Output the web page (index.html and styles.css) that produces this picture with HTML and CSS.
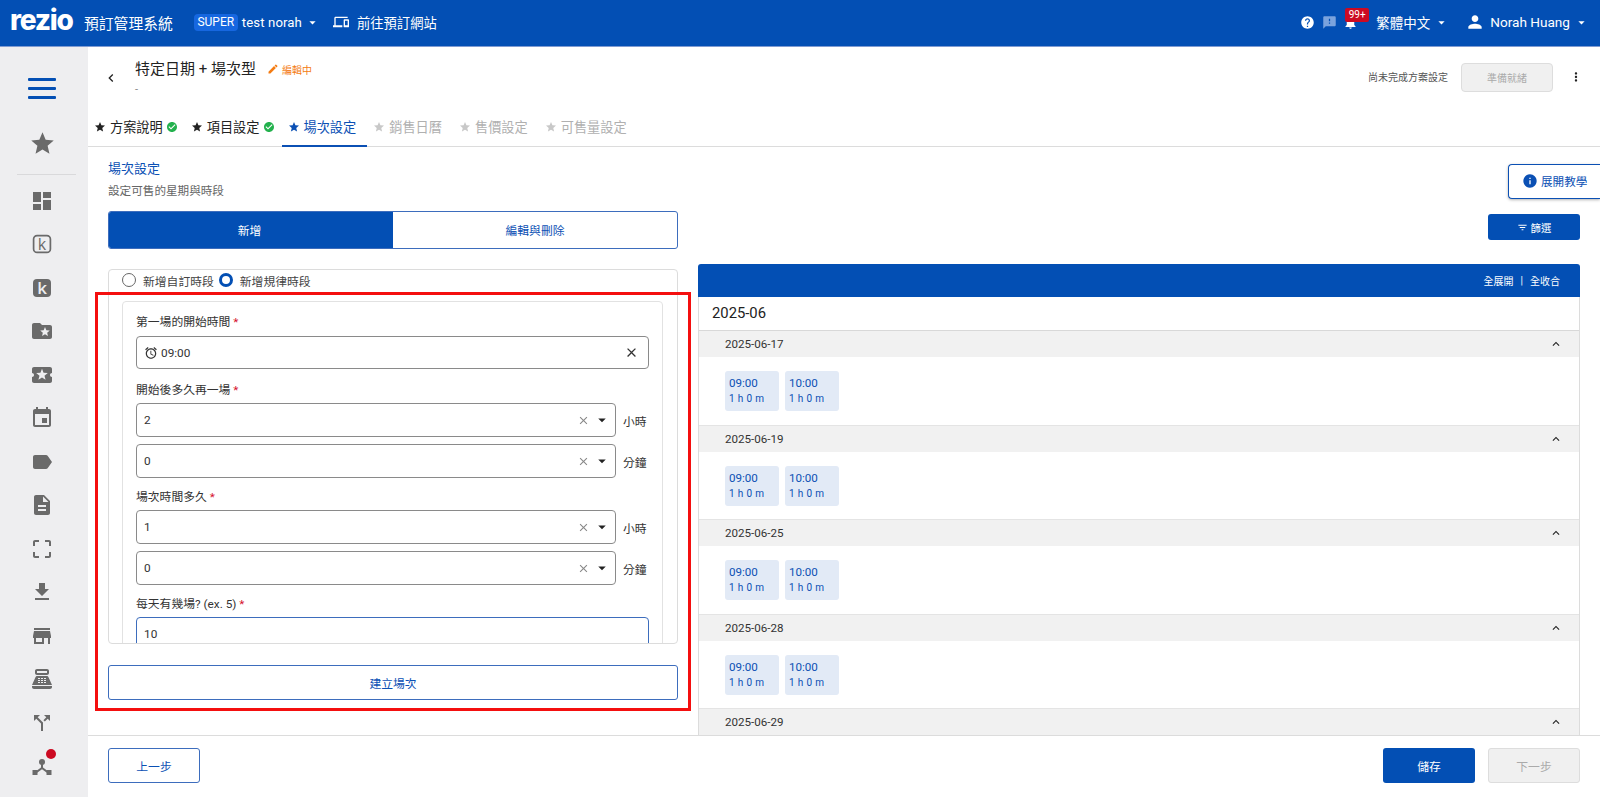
FILE: index.html
```html
<!DOCTYPE html>
<html lang="zh-Hant">
<head>
<meta charset="utf-8">
<title>預訂管理系統</title>
<link rel="stylesheet" href="styles.css">
</head>
<body>
<svg class="defs" width="0" height="0" aria-hidden="true">
  <symbol id="i-star" viewBox="0 0 24 24"><path d="M12 17.27L18.18 21l-1.64-7.03L22 9.24l-7.19-.61L12 2 9.19 8.63 2 9.24l5.46 4.73L5.82 21z"/></symbol>
  <symbol id="i-check" viewBox="0 0 24 24"><path d="M12 2C6.48 2 2 6.48 2 12s4.48 10 10 10 10-4.48 10-10S17.52 2 12 2zm-2 15l-5-5 1.41-1.41L10 14.17l7.59-7.59L19 8l-9 9z"/></symbol>
  <symbol id="i-close" viewBox="0 0 24 24"><path d="M19 6.41L17.59 5 12 10.59 6.41 5 5 6.41 10.59 12 5 17.59 6.41 19 12 13.41 17.59 19 19 17.59 13.41 12z"/></symbol>
  <symbol id="i-up" viewBox="0 0 24 24"><path d="M12 8l-6 6 1.41 1.41L12 10.83l4.59 4.58L18 14z"/></symbol>
  <symbol id="i-caret" viewBox="0 0 24 24"><path d="M7 10l5 5 5-5z"/></symbol>
</svg>

<div class="app">
  <header class="topbar">
    <span class="logo">rezio</span>
    <span class="sys">預訂管理系統</span>
    <span class="badge-super">SUPER</span>
    <span class="tenant">test norah</span>
    <svg class="caret-w" viewBox="0 0 24 24"><use href="#i-caret"/></svg>
    <svg class="ic-device" viewBox="0 0 24 24"><path d="M4 6h18V4H4c-1.1 0-2 .9-2 2v11H0v3h14v-3H4V6zm19 2h-6c-.55 0-1 .45-1 1v10c0 .55.45 1 1 1h6c.55 0 1-.45 1-1V9c0-.55-.45-1-1-1zm-1 9h-4v-7h4v7z"/></svg>
    <span class="goto">前往預訂網站</span>
    <span class="spacer"></span>
    <svg class="ic-help" viewBox="0 0 24 24"><path d="M12 2C6.48 2 2 6.48 2 12s4.48 10 10 10 10-4.48 10-10S17.52 2 12 2zm1 17h-2v-2h2v2zm2.07-7.75l-.9.92C13.45 12.9 13 13.5 13 15h-2v-.5c0-1.1.45-2.1 1.17-2.83l1.24-1.26c.37-.36.59-.86.59-1.41 0-1.1-.9-2-2-2s-2 .9-2 2H8c0-2.21 1.79-4 4-4s4 1.79 4 4c0 .88-.36 1.68-.93 2.25z"/></svg>
    <svg class="ic-feedback" viewBox="0 0 24 24"><path d="M20 2H4c-1.1 0-1.99.9-1.99 2L2 22l4-4h14c1.1 0 2-.9 2-2V4c0-1.1-.9-2-2-2zm-7 12h-2v-2h2v2zm0-4h-2V6h2v4z"/></svg>
    <span class="bell">
      <svg class="ic-bell" viewBox="0 0 24 24"><path d="M12 22c1.1 0 2-.9 2-2h-4c0 1.1.89 2 2 2zm6-6v-5c0-3.07-1.64-5.64-4.5-6.32V4c0-.83-.67-1.5-1.5-1.5s-1.5.67-1.5 1.5v.68C7.63 5.36 6 7.92 6 11v5l-2 2v1h16v-1l-2-2z"/></svg>
      <span class="bell-count">99+</span>
    </span>
    <span class="lang">繁體中文</span>
    <svg class="caret-w caret-lang" viewBox="0 0 24 24"><use href="#i-caret"/></svg>
    <svg class="ic-user" viewBox="0 0 24 24"><path d="M12 12c2.21 0 4-1.79 4-4s-1.79-4-4-4-4 1.79-4 4 1.79 4 4 4zm0 2c-2.67 0-8 1.34-8 4v2h16v-2c0-2.66-5.33-4-8-4z"/></svg>
    <span class="user">Norah Huang</span>
    <svg class="caret-w caret-user" viewBox="0 0 24 24"><use href="#i-caret"/></svg>
  </header>

  <div class="shell">
    <nav class="sidebar">
      <div class="side-item side-menu"><span class="burger"><i></i><i></i><i></i></span></div>
      <div class="side-item"><svg viewBox="0 0 24 24" class="side-star"><use href="#i-star"/></svg></div>
      <div class="side-divider"></div>
      <div class="side-item"><svg viewBox="0 0 24 24"><path d="M3 13h8V3H3v10zm0 8h8v-6H3v6zm10 0h8V11h-8v10zm0-18v6h8V3h-8z"/></svg></div>
      <div class="side-item"><svg viewBox="0 0 24 24"><rect x="3.6" y="3.6" width="16.8" height="16.8" rx="3.5" fill="none" stroke="currentColor" stroke-width="1.7"/><text x="12" y="17.5" text-anchor="middle" class="k-text">k</text></svg></div>
      <div class="side-item"><svg viewBox="0 0 24 24"><rect x="3" y="3" width="18" height="18" rx="4"/><text x="12" y="18" text-anchor="middle" class="k-text k-solid">k</text></svg></div>
      <div class="side-item"><svg viewBox="0 0 24 24"><path d="M20 6h-8l-2-2H4c-1.1 0-1.99.9-1.99 2L2 18c0 1.1.9 2 2 2h16c1.1 0 2-.9 2-2V8c0-1.1-.9-2-2-2zm-2.06 11L15 15.28 12.06 17l.78-3.33-2.59-2.24 3.41-.29L15 8l1.34 3.14 3.41.29-2.59 2.24.78 3.33z"/></svg></div>
      <div class="side-item"><svg viewBox="0 0 24 24"><path d="M20 12c0-1.1.9-2 2-2V6c0-1.1-.9-2-2-2H4c-1.1 0-1.99.9-1.99 2v4c1.1 0 1.99.9 1.99 2s-.89 2-2 2v4c0 1.1.9 2 2 2h16c1.1 0 2-.9 2-2v-4c-1.1 0-2-.9-2-2zm-4.42 4.8L12 14.5l-3.58 2.3 1.08-4.12-3.29-2.69 4.24-.25L12 5.8l1.54 3.95 4.24.25-3.29 2.69 1.09 4.11z"/></svg></div>
      <div class="side-item"><svg viewBox="0 0 24 24"><path d="M17 12h-5v5h5v-5zM16 1v2H8V1H6v2H5c-1.11 0-1.99.9-1.99 2L3 19c0 1.1.89 2 2 2h14c1.1 0 2-.9 2-2V5c0-1.1-.9-2-2-2h-1V1h-2zm3 18H5V8h14v11z"/></svg></div>
      <div class="side-item"><svg viewBox="0 0 24 24"><path d="M17.63 5.84C17.27 5.33 16.67 5 16 5L5 5.01C3.9 5.01 3 5.9 3 7v10c0 1.1.9 1.99 2 1.99L16 19c.67 0 1.27-.33 1.63-.84L22 12l-4.37-6.16z"/></svg></div>
      <div class="side-item"><svg viewBox="0 0 24 24"><path d="M14 2H6c-1.1 0-1.99.9-1.99 2L4 20c0 1.1.89 2 1.99 2H18c1.1 0 2-.9 2-2V8l-6-6zm2 16H8v-2h8v2zm0-4H8v-2h8v2zm-3-5V3.5L18.5 9H13z"/></svg></div>
      <div class="side-item"><svg viewBox="0 0 24 24"><path d="M3 5v4h2V5h4V3H5c-1.1 0-2 .9-2 2zm2 10H3v4c0 1.1.9 2 2 2h4v-2H5v-4zm14 4h-4v2h4c1.1 0 2-.9 2-2v-4h-2v4zm0-16h-4v2h4v4h2V5c0-1.1-.9-2-2-2z"/></svg></div>
      <div class="side-item"><svg viewBox="0 0 24 24"><path d="M19 9h-4V3H9v6H5l7 7 7-7zM5 18v2h14v-2H5z"/></svg></div>
      <div class="side-item"><svg viewBox="0 0 24 24"><path d="M20 4H4v2h16V4zm1 10v-2l-1-5H4l-1 5v2h1v6h10v-6h4v6h2v-6h1zm-9 4H6v-4h6v4z"/></svg></div>
      <div class="side-item"><svg viewBox="0 0 24 24"><path d="M17 2H7c-1.1 0-2 .9-2 2v2c0 1.1.9 2 2 2h10c1.1 0 2-.9 2-2V4c0-1.1-.9-2-2-2zm0 4H7V4h10v2zm3 16H4c-1.1 0-2-.9-2-2v-1h20v1c0 1.1-.9 2-2 2zm-1.47-11.81C18.21 9.47 17.49 9 16.7 9H7.3c-.79 0-1.51.47-1.83 1.19L2 18h20l-3.47-7.81zM9 16H8v-1h2v1zm0-2H8v-1h2v1zm0-2H8v-1h2v1zm4 4h-2v-1h2v1zm0-2h-2v-1h2v1zm0-2h-2v-1h2v1zm3 4h-2v-1h2v1zm0-2h-2v-1h2v1zm0-2h-2v-1h2v1z"/></svg></div>
      <div class="side-item"><svg viewBox="0 0 24 24"><path d="M14 4l2.29 2.29-2.88 2.88 1.42 1.42 2.88-2.88L20 10V4zm-4 0H4v6l2.29-2.29 4.71 4.7V20h2v-8.41l-5.29-5.3z"/></svg></div>
      <div class="side-item side-hub">
        <svg viewBox="0 0 24 24"><circle cx="12" cy="8" r="3"/><path d="M11 10h2v3.6l5.4 3.9-1.2 1.6-5.2-3.8-5.2 3.8-1.2-1.6 5.4-3.9z"/><rect x="2.5" y="16" width="5" height="5"/><rect x="16.5" y="16" width="5" height="5"/></svg>
        <span class="hub-dot"></span>
      </div>
    </nav>

    <main class="main">
      <div class="page-head">
        <svg class="ic-back" viewBox="0 0 24 24"><path d="M15.41 7.41L14 6l-6 6 6 6 1.41-1.41L10.83 12z"/></svg>
        <div class="page-title-wrap">
          <div class="page-title-row">
            <h1 class="page-title">特定日期 + 場次型</h1>
            <svg class="ic-pencil" viewBox="0 0 24 24"><path d="M3 17.25V21h3.75L17.81 9.94l-3.75-3.75L3 17.25zM20.71 7.04c.39-.39.39-1.02 0-1.41l-2.34-2.34c-.39-.39-1.02-.39-1.41 0l-1.83 1.83 3.75 3.75 1.83-1.83z"/></svg>
            <span class="editing">編輯中</span>
          </div>
          <div class="page-sub">-</div>
        </div>
        <div class="page-actions">
          <span class="incomplete">尚未完成方案設定</span>
          <button class="btn-ready">準備就緒</button>
          <svg class="ic-dots" viewBox="0 0 24 24"><path d="M12 8c1.1 0 2-.9 2-2s-.9-2-2-2-2 .9-2 2 .9 2 2 2zm0 2c-1.1 0-2 .9-2 2s.9 2 2 2 2-.9 2-2-.9-2-2-2zm0 6c-1.1 0-2 .9-2 2s.9 2 2 2 2-.9 2-2-.9-2-2-2z"/></svg>
        </div>
      </div>

      <div class="tabs">
        <div class="tab tab-done"><svg class="tab-star" viewBox="0 0 24 24"><use href="#i-star"/></svg>方案說明<svg class="tab-check" viewBox="0 0 24 24"><use href="#i-check"/></svg></div>
        <div class="tab tab-done"><svg class="tab-star" viewBox="0 0 24 24"><use href="#i-star"/></svg>項目設定<svg class="tab-check" viewBox="0 0 24 24"><use href="#i-check"/></svg></div>
        <div class="tab tab-active"><svg class="tab-star" viewBox="0 0 24 24"><use href="#i-star"/></svg>場次設定</div>
        <div class="tab tab-off"><svg class="tab-star" viewBox="0 0 24 24"><use href="#i-star"/></svg>銷售日曆</div>
        <div class="tab tab-off"><svg class="tab-star" viewBox="0 0 24 24"><use href="#i-star"/></svg>售價設定</div>
        <div class="tab tab-off"><svg class="tab-star" viewBox="0 0 24 24"><use href="#i-star"/></svg>可售量設定</div>
      </div>

      <div class="workspace">
        <section class="col-left">
          <h2 class="section-title">場次設定</h2>
          <p class="section-sub">設定可售的星期與時段</p>
          <div class="segment">
            <div class="seg seg-on">新增</div>
            <div class="seg">編輯與刪除</div>
          </div>

          <div class="form-card">
            <div class="radio-row">
              <span class="radio"></span><span class="radio-label">新增自訂時段</span>
              <span class="radio radio-on"></span><span class="radio-label">新增規律時段</span>
            </div>
            <div class="inner-card">
              <div class="label">第一場的開始時間 <b>*</b></div>
              <div class="field field-time">
                <svg class="ic-alarm" viewBox="0 0 24 24"><path d="M22 5.72l-4.6-3.86-1.29 1.53 4.6 3.86L22 5.72zM7.88 3.39L6.6 1.86 2 5.71l1.29 1.53 4.59-3.85zM12.5 8H11v6l4.75 2.85.75-1.23-4-2.37V8zM12 4c-4.97 0-9 4.03-9 9s4.03 9 9 9 9-4.03 9-9-4.03-9-9-9zm0 16c-3.87 0-7-3.13-7-7s3.13-7 7-7 7 3.13 7 7-3.13 7-7 7z"/></svg>
                <span class="value">09:00</span>
                <svg class="ic-x-dark" viewBox="0 0 24 24"><use href="#i-close"/></svg>
              </div>

              <div class="label label-2">開始後多久再一場 <b>*</b></div>
              <div class="select-row first">
                <div class="field"><span class="value">2</span><svg class="ic-x" viewBox="0 0 24 24"><use href="#i-close"/></svg><svg class="ic-drop" viewBox="0 0 24 24"><use href="#i-caret"/></svg></div>
                <span class="unit">小時</span>
              </div>
              <div class="select-row">
                <div class="field"><span class="value">0</span><svg class="ic-x" viewBox="0 0 24 24"><use href="#i-close"/></svg><svg class="ic-drop" viewBox="0 0 24 24"><use href="#i-caret"/></svg></div>
                <span class="unit">分鐘</span>
              </div>

              <div class="label label-3">場次時間多久 <b>*</b></div>
              <div class="select-row first-b">
                <div class="field"><span class="value">1</span><svg class="ic-x" viewBox="0 0 24 24"><use href="#i-close"/></svg><svg class="ic-drop" viewBox="0 0 24 24"><use href="#i-caret"/></svg></div>
                <span class="unit">小時</span>
              </div>
              <div class="select-row">
                <div class="field"><span class="value">0</span><svg class="ic-x" viewBox="0 0 24 24"><use href="#i-close"/></svg><svg class="ic-drop" viewBox="0 0 24 24"><use href="#i-caret"/></svg></div>
                <span class="unit">分鐘</span>
              </div>

              <div class="label label-3">每天有幾場? (ex. 5) <b>*</b></div>
              <div class="field field-focus"><span class="value">10</span></div>
            </div>
          </div>

          <button class="btn-create">建立場次</button>
          <div class="highlight"></div>
        </section>

        <section class="col-right">
          <div class="filter-row">
            <button class="btn-filter"><svg viewBox="0 0 24 24"><path d="M10 18h4v-2h-4v2zM3 6v2h18V6H3zm3 7h12v-2H6v2z"/></svg>篩選</button>
          </div>
          <div class="cal">
            <div class="cal-head"><span>全展開</span><i>|</i><span>全收合</span></div>
            <div class="cal-body">
              <div class="cal-month">2025-06</div>

              <div class="day-head"><span>2025-06-17</span><svg viewBox="0 0 24 24"><use href="#i-up"/></svg></div>
              <div class="day-body">
                <div class="chip"><strong>09:00</strong><small>1 h 0 m</small></div>
                <div class="chip"><strong>10:00</strong><small>1 h 0 m</small></div>
              </div>

              <div class="day-head"><span>2025-06-19</span><svg viewBox="0 0 24 24"><use href="#i-up"/></svg></div>
              <div class="day-body">
                <div class="chip"><strong>09:00</strong><small>1 h 0 m</small></div>
                <div class="chip"><strong>10:00</strong><small>1 h 0 m</small></div>
              </div>

              <div class="day-head"><span>2025-06-25</span><svg viewBox="0 0 24 24"><use href="#i-up"/></svg></div>
              <div class="day-body">
                <div class="chip"><strong>09:00</strong><small>1 h 0 m</small></div>
                <div class="chip"><strong>10:00</strong><small>1 h 0 m</small></div>
              </div>

              <div class="day-head"><span>2025-06-28</span><svg viewBox="0 0 24 24"><use href="#i-up"/></svg></div>
              <div class="day-body">
                <div class="chip"><strong>09:00</strong><small>1 h 0 m</small></div>
                <div class="chip"><strong>10:00</strong><small>1 h 0 m</small></div>
              </div>

              <div class="day-head"><span>2025-06-29</span><svg viewBox="0 0 24 24"><use href="#i-up"/></svg></div>
            </div>
          </div>
        </section>

        <button class="tutorial"><svg viewBox="0 0 24 24"><path d="M12 2C6.48 2 2 6.48 2 12s4.48 10 10 10 10-4.48 10-10S17.52 2 12 2zm1 15h-2v-6h2v6zm0-8h-2V7h2v2z"/></svg>展開教學</button>
      </div>

      <footer class="footer">
        <button class="btn-prev">上一步</button>
        <span class="spacer"></span>
        <button class="btn-save">儲存</button>
        <button class="btn-next">下一步</button>
      </footer>
    </main>
  </div>
</div>
</body>
</html>
```

FILE: styles.css
```css
* { box-sizing: border-box; }
html, body { margin: 0; height: 100%; overflow: hidden; }
body {
  font-family: Roboto, "Noto Sans CJK TC", "Liberation Sans", sans-serif;
  color: #222;
  background: #fff;
}
button { font-family: inherit; cursor: pointer; }
h1, h2, p { margin: 0; font-weight: 400; }
.defs { position: absolute; }
.spacer { flex: 1; }
svg { fill: currentColor; display: block; flex: none; }

.app { height: 797px; display: flex; flex-direction: column; }

/* top bar */
.topbar {
  height: 47px;
  flex: none;
  background: #034fb4;
  border-bottom: 1px solid #7f9bd2;
  color: #fff;
  display: flex;
  align-items: center;
  padding-left: 10px;
  padding-bottom: 2px;
}
.logo {
  font-family: Inter, sans-serif;
  font-weight: 800;
  font-size: 28px;
  letter-spacing: -1.2px;
  line-height: 1;
  width: 64px;
  margin-top: -4px;
}
.sys { margin-left: 10px; font-size: 14.8px; }
.badge-super {
  margin-left: 21px;
  background: #1667e0;
  border-radius: 4px;
  height: 17px;
  line-height: 17px;
  width: 44px;
  text-align: center;
  font-size: 12px;
}
.tenant { margin-left: 4px; font-size: 13.2px; letter-spacing: .1px; }
.caret-w { width: 15px; height: 15px; margin-left: 3px; }
.ic-device { width: 16px; height: 16px; margin-left: 13px; }
.goto { margin-left: 8px; font-size: 13.3px; }
.ic-help { width: 15px; height: 15px; margin-right: 7px; }
.ic-feedback { width: 15px; height: 15px; color: #7ba3dd; margin-right: 6px; }
.bell { position: relative; width: 15px; height: 15px; }
.ic-bell { width: 15px; height: 15px; }
.bell-count {
  position: absolute;
  left: 2px;
  top: -7px;
  width: 24px;
  height: 14px;
  border-radius: 2px;
  background: #cc0a22;
  font-size: 10px;
  line-height: 14px;
  text-align: center;
}
.lang { margin-left: 18px; font-size: 13.5px; }
.caret-lang { margin-left: 4px; }
.ic-user { width: 20px; height: 20px; margin-left: 16px; }
.user { margin-left: 5px; font-size: 13.6px; }
.caret-user { margin-left: 4px; margin-right: 11px; }

/* shell */
.shell { flex: 1; display: flex; min-height: 0; }
.sidebar {
  width: 88px;
  flex: none;
  background: #eeeef0;
  color: #6a6a6a;
  padding: 20px 4px 0 0;
  display: flex;
  flex-direction: column;
  align-items: center;
}
.side-item {
  height: 43.5px;
  width: 100%;
  flex: none;
  display: flex;
  align-items: center;
  justify-content: center;
  position: relative;
}
.side-item > svg { width: 24px; height: 24px; }
.side-item > .side-star { width: 27px; height: 27px; }
.side-menu { margin-bottom: 11.5px; }
.burger { display: flex; flex-direction: column; gap: 6px; width: 28px; }
.burger i { display: block; height: 3px; background: #034fb4; border-radius: 1px; }
.side-divider { width: 59px; height: 1px; background: #d9d9db; margin: 8px 0 4.25px 8px; flex: none; }
.k-text { font-family: "Open Sans", sans-serif; font-size: 16px; font-weight: 500; fill: currentColor; }
.k-solid { fill: #eeeef0; font-weight: 600; font-size: 17px; }
.hub-dot {
  position: absolute;
  left: 46px;
  top: 5px;
  width: 10px;
  height: 10px;
  border-radius: 50%;
  background: #cc0a22;
}

/* main */
.main { flex: 1; min-width: 0; display: flex; flex-direction: column; position: relative; }
.page-head { height: 61px; flex: none; display: flex; padding-left: 15px; }
.ic-back { width: 16px; height: 16px; margin-top: 23px; color: #222; }
.page-title-wrap { margin-left: 16px; padding-top: 12px; }
.page-title-row { display: flex; align-items: center; height: 20px; }
.page-title { font-size: 15px; line-height: 20px; color: #222; }
.ic-pencil { width: 12px; height: 12px; color: #f47c13; margin-left: 11px; }
.editing { font-size: 10px; color: #f47c13; margin-left: 3px; }
.page-sub { font-size: 11px; line-height: 16px; color: #888; margin-top: 3px; }
.page-actions { margin-left: auto; display: flex; align-items: flex-start; padding-top: 16px; }
.incomplete { font-size: 10px; line-height: 30px; color: #555; }
.btn-ready {
  margin-left: 13px;
  width: 92px;
  height: 29px;
  background: #f0f0f0;
  border: 1px solid #ddd;
  border-radius: 4px;
  font-size: 10px;
  color: #aaa;
}
.ic-dots { width: 14px; height: 14px; margin: 7px 17px 0 16px; color: #222; }

/* tabs */
.tabs {
  height: 39px;
  flex: none;
  display: flex;
  border-bottom: 1px solid #dcdcdc;
  font-size: 13.2px;
}
.tab {
  display: flex;
  align-items: center;
  padding: 0 11px 2px 6px;
  height: 39px;
  white-space: nowrap;
}
.tab-star { width: 12px; height: 12px; margin-right: 4px; }
.tab-check { width: 12px; height: 12px; color: #23b14d; margin-left: 3px; }
.tab-done { color: #222; padding-right: 7px; }
.tab-active { color: #0b50b4; border-bottom: 2px solid #0b50b4; padding-bottom: 0; }
.tab-off { color: #b0b0b0; }
.tab-off .tab-star { color: #c8c8c8; }

/* workspace */
.workspace {
  flex: 1;
  min-height: 0;
  display: flex;
  gap: 20px;
  padding: 0 20px;
  position: relative;
  overflow: hidden;
}
.col-left { width: 570px; flex: none; padding-top: 12px; position: relative; }
.section-title { font-size: 13px; line-height: 18px; color: #0b50b4; padding-top: 1px; height: 18px; }
.section-sub { font-size: 11.6px; line-height: 18px; color: #666; margin-top: 4px; padding-top: 1px; height: 18px; }
.segment {
  display: flex;
  height: 38px;
  margin-top: 12px;
  border: 1px solid #3d6dbd;
  border-radius: 3px;
  overflow: hidden;
  font-size: 11.8px;
}
.seg { display: flex; align-items: center; justify-content: center; flex: 1; color: #0b50b4; padding-bottom: 1px; }
.seg-on { flex: none; width: 284px; background: #034fb4; color: #fff; padding-right: 3px; }

.form-card {
  margin-top: 20px;
  height: 375px;
  border: 1px solid #dcdcdc;
  border-radius: 4px;
  overflow: hidden;
  padding: 0 14px 0 13px;
}
.radio-row {
  height: 20px;
  display: flex;
  align-items: center;
  font-size: 11.8px;
  color: #444;
}
.radio {
  width: 14px;
  height: 14px;
  border: 1.5px solid #666;
  border-radius: 50%;
  margin-right: 7px;
  flex: none;
}
.radio-on { border: 3.5px solid #034fb4; margin-left: 5px; margin-right: 7px; }
.inner-card {
  margin-top: 11px;
  border: 1px solid #e2e2e2;
  border-radius: 4px 4px 0 0;
  padding: 10px 13px 20px 13px;
}
.label { font-size: 11.8px; line-height: 21px; height: 18px; color: #333; }
.label b { color: #d5112c; font-weight: 400; }
.label-2 { margin-top: 11px; }
.label-3 { margin-top: 9px; }
.field {
  height: 34px;
  border: 1px solid #8a8a8a;
  border-radius: 4px;
  background: #fff;
  display: flex;
  align-items: center;
  padding-left: 7px;
  font-size: 11.8px;
  color: #333;
  flex: 1;
  min-width: 0;
  margin-top: 5px;
}
.field-time { margin-top: 6px; height: 33px; }
.field-focus { border-color: #3d6dbd; }
.value { flex: 1; }
.ic-alarm { width: 14px; height: 14px; margin-right: 3px; color: #333; }
.ic-x-dark { width: 15px; height: 15px; margin-right: 9px; color: #333; }
.ic-x { width: 13px; height: 13px; color: #888; margin-right: 3px; }
.ic-drop { width: 18px; height: 18px; color: #222; margin-right: 4px; }
.select-row { display: flex; align-items: center; margin-top: 7px; }
.select-row .field { margin-top: 0; }
.select-row.first { margin-top: 5px; }
.select-row.first-b { margin-top: 5px; }
.unit { width: 33px; font-size: 11.8px; color: #333; padding-left: 7px; flex: none; white-space: nowrap; }

.btn-create {
  display: block;
  width: 100%;
  height: 35px;
  margin-top: 21px;
  background: #fff;
  border: 1px solid #3d6dbd;
  border-radius: 3px;
  font-size: 11.8px;
  color: #0b50b4;
}
.highlight {
  position: absolute;
  left: -13px;
  top: 145px;
  width: 596px;
  height: 419px;
  border: 3px solid #f40f0f;
  pointer-events: none;
}

/* right column */
.col-right { flex: 1; min-width: 0; padding-top: 67px; }
.filter-row { display: flex; justify-content: flex-end; }
.btn-filter {
  width: 92px;
  height: 26px;
  background: #034fb4;
  border: 0;
  border-radius: 3px;
  color: #fff;
  font-size: 10.4px;
  display: flex;
  align-items: center;
  justify-content: center;
  gap: 3px;
  padding: 0;
}
.btn-filter svg { width: 11px; height: 11px; }
.cal { margin-top: 24px; }
.cal-head {
  height: 33px;
  background: #034fb4;
  border-radius: 3px 3px 0 0;
  color: #fff;
  font-size: 10px;
  display: flex;
  align-items: center;
  justify-content: flex-end;
  padding-right: 20px;
}
.cal-head i { font-style: normal; margin: 0 7px 0 7px; }
.cal-body { border: solid #dcdcdc; border-width: 0 1px; }
.cal-month {
  height: 34px;
  border-bottom: 1px solid #d8d8d8;
  padding-left: 13px;
  font-size: 14.8px;
  line-height: 32px;
  color: #222;
}
.day-head {
  height: 26px;
  background: #f1f1f1;
  display: flex;
  align-items: center;
  justify-content: space-between;
  padding: 0 16px 0 26px;
  font-size: 11.6px;
  color: #333;
}
.day-head svg { width: 14px; height: 14px; color: #222; }
.day-body {
  height: 68.5px;
  border-bottom: 1px solid #e4e4e4;
  padding: 14px 0 0 26px;
  display: flex;
  gap: 6px;
  align-items: flex-start;
}
.chip {
  width: 54px;
  height: 40px;
  background: #e2eaf6;
  border-radius: 3px;
  color: #0b50b4;
  padding: 5px 0 0 4px;
  display: flex;
  flex-direction: column;
}
.chip strong { font-weight: 400; font-size: 11.6px; line-height: 15px; }
.chip small { font-size: 10px; line-height: 15px; letter-spacing: .35px; }

.tutorial {
  position: absolute;
  right: 0;
  top: 17px;
  width: 92px;
  height: 35px;
  background: #fff;
  border: 1px solid #0b50b4;
  border-right: 0;
  border-radius: 4px 0 0 4px;
  box-shadow: 0 1px 3px rgba(0, 0, 0, .3);
  color: #0b50b4;
  font-size: 11.6px;
  display: flex;
  align-items: center;
  padding: 0 0 1px 13px;
  gap: 3px;
}
.tutorial svg { width: 16px; height: 16px; }

/* footer */
.footer {
  height: 62px;
  flex: none;
  border-top: 1px solid #dcdcdc;
  display: flex;
  align-items: flex-start;
  padding: 12px 20px 0;
  background: #fff;
  position: relative;
}
.footer button { width: 92px; height: 35px; border-radius: 3px; font-size: 11.8px; }
.btn-prev { background: #fff; border: 1px solid #3d6dbd; color: #0b50b4; }
.btn-save { background: #034fb4; border: 0; color: #fff; margin-right: 13px; }
.btn-next { background: #f0f0f0; border: 1px solid #ddd; color: #aaa; }
```
